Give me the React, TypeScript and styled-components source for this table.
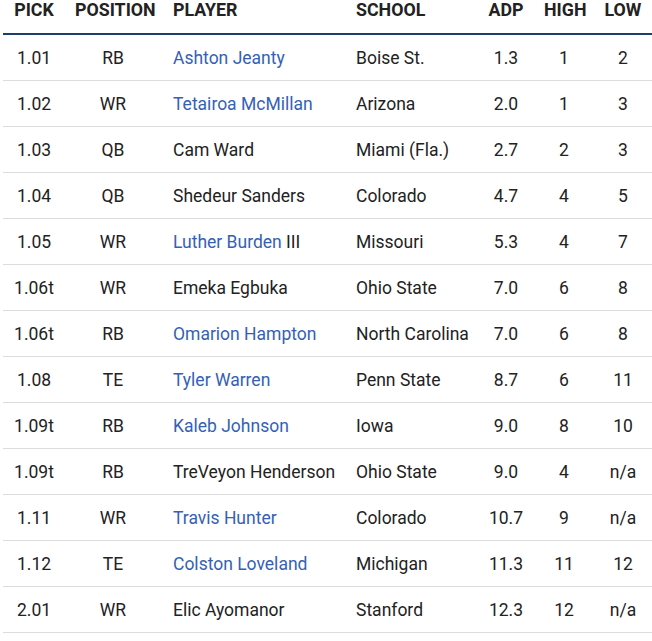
import React from "react";
import { styled, createGlobalStyle } from "styled-components";

type Row = {
  pick: string;
  pos: string;
  player: string;
  suffix?: string;
  linked: boolean;
  school: string;
  adp: string;
  high: string;
  low: string;
};

const rows: Row[] = [
  { pick: "1.01", pos: "RB", player: "Ashton Jeanty", linked: true, school: "Boise St.", adp: "1.3", high: "1", low: "2" },
  { pick: "1.02", pos: "WR", player: "Tetairoa McMillan", linked: true, school: "Arizona", adp: "2.0", high: "1", low: "3" },
  { pick: "1.03", pos: "QB", player: "Cam Ward", linked: false, school: "Miami (Fla.)", adp: "2.7", high: "2", low: "3" },
  { pick: "1.04", pos: "QB", player: "Shedeur Sanders", linked: false, school: "Colorado", adp: "4.7", high: "4", low: "5" },
  { pick: "1.05", pos: "WR", player: "Luther Burden", suffix: " III", linked: true, school: "Missouri", adp: "5.3", high: "4", low: "7" },
  { pick: "1.06t", pos: "WR", player: "Emeka Egbuka", linked: false, school: "Ohio State", adp: "7.0", high: "6", low: "8" },
  { pick: "1.06t", pos: "RB", player: "Omarion Hampton", linked: true, school: "North Carolina", adp: "7.0", high: "6", low: "8" },
  { pick: "1.08", pos: "TE", player: "Tyler Warren", linked: true, school: "Penn State", adp: "8.7", high: "6", low: "11" },
  { pick: "1.09t", pos: "RB", player: "Kaleb Johnson", linked: true, school: "Iowa", adp: "9.0", high: "8", low: "10" },
  { pick: "1.09t", pos: "RB", player: "TreVeyon Henderson", linked: false, school: "Ohio State", adp: "9.0", high: "4", low: "n/a" },
  { pick: "1.11", pos: "WR", player: "Travis Hunter", linked: true, school: "Colorado", adp: "10.7", high: "9", low: "n/a" },
  { pick: "1.12", pos: "TE", player: "Colston Loveland", linked: true, school: "Michigan", adp: "11.3", high: "11", low: "12" },
  { pick: "2.01", pos: "WR", player: "Elic Ayomanor", linked: false, school: "Stanford", adp: "12.3", high: "12", low: "n/a" },
];

// column widths, left to right
const widths = [62, 96, 183, 134, 56, 60, 58];

const GlobalStyle = createGlobalStyle`
  body {
    margin: 0;
    background: #fff;
    font-family: Roboto, "Liberation Sans", sans-serif;
    color: #222;
  }
`;

const Wrap = styled.div`
  padding-left: 3px;
`;

const Table = styled.table`
  width: 649px;
  table-layout: fixed;
  border-collapse: separate;
  border-spacing: 0;
  font-size: 17.5px;
`;

const Col = styled.col<{ $w: number }>`
  width: ${(p) => p.$w}px;
`;

const Head = styled.th<{ $left?: boolean }>`
  height: 35px;
  padding: 0 ${(p) => (p.$left ? "10px 13px 12px" : "10px 13px")};
  box-sizing: border-box;
  line-height: 20px;
  vertical-align: bottom;
  font-weight: 700;
  font-size: 17.8px;
  color: #222;
  text-align: ${(p) => (p.$left ? "left" : "center")};
  border-bottom: 2px solid #1d3d6b;
  white-space: nowrap;
`;

const Cell = styled.td<{ $left?: boolean }>`
  height: 46px;
  padding: 0 10px 0 ${(p) => (p.$left ? "12px" : "10px")};
  box-sizing: border-box;
  text-align: ${(p) => (p.$left ? "left" : "center")};
  border-bottom: 1px solid #dcdcdc;
  color: #222;
  white-space: nowrap;
`;

const PlayerLink = styled.a`
  color: #3461b5;
  text-decoration: none;
`;

const App: React.FC = () => {
  return (
    <>
      <GlobalStyle />
      <Wrap>
        <Table>
          <colgroup>
            {widths.map((w, i) => (
              <Col key={i} $w={w} />
            ))}
          </colgroup>
          <thead>
            <tr>
              <Head>PICK</Head>
              <Head>POSITION</Head>
              <Head $left>PLAYER</Head>
              <Head $left>SCHOOL</Head>
              <Head>ADP</Head>
              <Head>HIGH</Head>
              <Head>LOW</Head>
            </tr>
          </thead>
          <tbody>
            {rows.map((r, i) => (
              <tr key={i}>
                <Cell>{r.pick}</Cell>
                <Cell>{r.pos}</Cell>
                <Cell $left>
                  {r.linked ? <PlayerLink href="#">{r.player}</PlayerLink> : r.player}
                  {r.suffix}
                </Cell>
                <Cell $left>{r.school}</Cell>
                <Cell>{r.adp}</Cell>
                <Cell>{r.high}</Cell>
                <Cell>{r.low}</Cell>
              </tr>
            ))}
          </tbody>
        </Table>
      </Wrap>
    </>
  );
};

export default App;
